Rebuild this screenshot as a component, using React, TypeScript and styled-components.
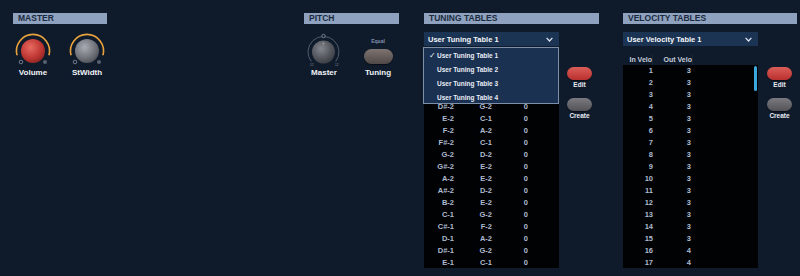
import React from "react";
import styled, { createGlobalStyle } from "styled-components";

const GlobalStyle = createGlobalStyle`
  html, body {
    margin: 0;
    padding: 0;
    background: #0f1b2b;
  }

  body {
    font-family: "Liberation Sans", Arial, sans-serif;
  }
`;

const Panel = styled.div`
  width: 800px;
  height: 276px;
  box-sizing: border-box;
  padding: 13px 3px 0 13px;

  display: flex;
  align-items: flex-start;

  background: #0f1b2b;
  overflow: hidden;
`;

const Section = styled.section<{ $width: number; $gap?: number }>`
  width: ${(p) => p.$width}px;
  margin-right: ${(p) => p.$gap ?? 0}px;
  flex: none;

  display: flex;
  flex-direction: column;
`;

const SectionTitle = styled.div`
  height: 11px;
  padding-left: 5px;

  background: #8ea2bf;
  color: #1c2a3e;
  font-size: 8.5px;
  font-weight: 700;
  line-height: 11px;
`;

const ControlRow = styled.div`
  display: flex;
  gap: 14px;
  margin-top: 9px;
`;

const Control = styled.div`
  width: 40px;

  display: flex;
  flex-direction: column;
  align-items: center;
`;

const ControlLabel = styled.div`
  margin-top: 1px;

  color: #f1f3f7;
  font-size: 8px;
  font-weight: 700;
  line-height: 10px;
`;

const SwitchBox = styled.div`
  height: 34px;

  display: flex;
  flex-direction: column;
  align-items: center;
`;

const SwitchValue = styled.div`
  margin-top: 5px;

  color: #8294b0;
  font-size: 5px;
  font-weight: 700;
  line-height: 7px;
`;

const PillButton = styled.div<{ $tone: "red" | "grey" | "brown"; $w: number; $h: number }>`
  width: ${(p) => p.$w}px;
  height: ${(p) => p.$h}px;
  border-radius: ${(p) => p.$h / 2}px;

  background: ${(p) =>
    p.$tone === "red"
      ? "linear-gradient(#dc5d58, #b9302f)"
      : p.$tone === "brown"
      ? "linear-gradient(#7e7472, #4f4846)"
      : "linear-gradient(#7b7a80, #535257)"};
  box-shadow: 0 1px 1px rgba(0, 0, 0, 0.5);
`;

const TuningPill = styled(PillButton)`
  margin-top: 4px;
`;

const Dropdown = styled.div`
  position: relative;
  width: 135px;
  height: 14px;
  margin-top: 8px;
  padding: 0 6px 0 4px;
  box-sizing: border-box;

  display: flex;
  align-items: center;
  justify-content: space-between;

  background: #1c3453;
  color: #f4f6fa;
  font-size: 7.5px;
  font-weight: 700;
`;

const Menu = styled.ul`
  position: absolute;
  top: 15px;
  left: -1px;
  z-index: 2;

  width: 136px;
  height: 57px;
  margin: 0;
  padding: 0;
  box-sizing: border-box;

  list-style: none;
  background: #1b3151;
  border: 1px solid #7d8ea8;
`;

const MenuItem = styled.li`
  height: 14px;
  padding-left: 5px;

  display: flex;
  align-items: center;

  color: #e9eef6;
  font-size: 6.5px;
  font-weight: 700;
`;

const Check = styled.span`
  width: 8px;

  font-family: "DejaVu Sans", sans-serif;
  font-size: 8px;
  font-weight: 700;
`;

const ColumnHead = styled.div`
  height: 11px;
  margin-top: 8px;
  width: 135px;

  display: grid;
  grid-template-columns: 30px 40px 34px;
`;

const HeadCell = styled.div`
  text-align: right;

  color: #c5cedc;
  font-size: 7px;
  font-weight: 700;
  line-height: 11px;
  border-right: 1px solid rgba(255, 255, 255, 0.05);
`;

const TableRow = styled.div`
  display: flex;
  align-items: flex-start;
`;

/* $skip: rows scrolled under the open menu */
const TableBody = styled.div<{ $skip?: number }>`
  position: relative;
  width: 135px;
  height: 203px;
  box-sizing: border-box;
  padding-top: ${(p) => (p.$skip ?? 0) * 12}px;
  flex: none;

  background: #010204;
  overflow: hidden;
`;

const DataRow = styled.div`
  height: 12px;

  display: grid;
  grid-template-columns: 30px 38px 36px;

  color: #aebbd0;
  font-size: 7.5px;
  font-weight: 700;
  line-height: 12px;
  text-align: right;
`;

const ScrollThumb = styled.div`
  position: absolute;
  top: 1px;
  right: 1px;

  width: 3px;
  height: 25px;
  border-radius: 2px;

  background: #3ba7de;
`;

const SideButtons = styled.div<{ $offset: number }>`
  width: 25px;
  margin-left: ${(p) => p.$offset}px;
  padding-top: 2px;

  display: flex;
  flex-direction: column;
  align-items: center;
`;

const SideLabel = styled.div`
  margin: 1px 0 9px;

  color: #e9edf4;
  font-size: 6.5px;
  font-weight: 700;
  line-height: 8px;
`;

type KnobProps = { fill: [string, string, string] };

function OrangeKnob({ fill }: KnobProps) {
  const id = `k${fill[0].slice(1)}`;
  return (
    <svg width="40" height="34" viewBox="0 0 40 34">
      <defs>
        <radialGradient id={id} cx="40%" cy="35%" r="70%">
          <stop offset="0%" stopColor={fill[0]} />
          <stop offset="60%" stopColor={fill[1]} />
          <stop offset="100%" stopColor={fill[2]} />
        </radialGradient>
      </defs>
      <path
        d="M4.1 22.3 A16.5 16.5 0 1 1 35.9 22.3"
        fill="none"
        stroke="#e9a23c"
        strokeWidth="1.6"
      />
      <circle cx="8" cy="29" r="1.8" fill="none" stroke="#7b8598" strokeWidth="0.9" />
      <circle cx="32" cy="29" r="2" fill="#56606e" />
      <circle cx="20" cy="18" r="12" fill={`url(#${id})`} />
    </svg>
  );
}

function PitchKnob() {
  return (
    <svg width="40" height="34" viewBox="0 0 40 34">
      <defs>
        <radialGradient id="pk" cx="40%" cy="35%" r="70%">
          <stop offset="0%" stopColor="#85878f" />
          <stop offset="60%" stopColor="#55575f" />
          <stop offset="100%" stopColor="#3a3c44" />
        </radialGradient>
      </defs>
      <path
        d="M7.3 28.5 A15.5 15.5 0 1 1 31.7 28.5"
        fill="none"
        stroke="#4f5a6c"
        strokeWidth="1"
      />
      <circle cx="19.5" cy="3" r="1.7" fill="#0f1b2b" stroke="#8a94a6" strokeWidth="0.8" />
      <circle cx="19.5" cy="19" r="11.5" fill="url(#pk)" />
      <circle cx="19.5" cy="10.5" r="0.9" fill="#9aa0aa" />
      <text x="5" y="33" fontSize="3.2" fill="#7f8a9c" fontFamily="Liberation Sans">-12</text>
      <text x="31" y="33" fontSize="3.2" fill="#7f8a9c" fontFamily="Liberation Sans">12</text>
    </svg>
  );
}

function Chevron() {
  return (
    <svg width="7" height="5" viewBox="0 0 7 5">
      <polyline points="0.6,0.8 3.5,4 6.4,0.8" fill="none" stroke="#dfe6f0" strokeWidth="1.2" />
    </svg>
  );
}

// first rows (C-2 .. D-2) sit under the open menu
const tuningRows: [string, string, string][] = [
  ["D#-2", "G-2", "0"],
  ["E-2", "C-1", "0"],
  ["F-2", "A-2", "0"],
  ["F#-2", "C-1", "0"],
  ["G-2", "D-2", "0"],
  ["G#-2", "E-2", "0"],
  ["A-2", "E-2", "0"],
  ["A#-2", "D-2", "0"],
  ["B-2", "E-2", "0"],
  ["C-1", "G-2", "0"],
  ["C#-1", "F-2", "0"],
  ["D-1", "A-2", "0"],
  ["D#-1", "G-2", "0"],
  ["E-1", "C-1", "0"],
];

const velocityRows = Array.from({ length: 17 }, (_, i) => [String(i + 1), i < 15 ? "3" : "4"]);

const tuningTables = ["User Tuning Table 1", "User Tuning Table 2", "User Tuning Table 3", "User Tuning Table 4"];

export default function App() {
  return (
    <>
      <GlobalStyle />
      <Panel>
        <Section $width={94} $gap={197}>
          <SectionTitle>MASTER</SectionTitle>
          <ControlRow>
            <Control>
              <OrangeKnob fill={["#e66a60", "#c23a36", "#8e2422"]} />
              <ControlLabel>Volume</ControlLabel>
            </Control>
            <Control>
              <OrangeKnob fill={["#a9abb3", "#75777f", "#4d4f57"]} />
              <ControlLabel>StWidth</ControlLabel>
            </Control>
          </ControlRow>
        </Section>

        <Section $width={95} $gap={25}>
          <SectionTitle>PITCH</SectionTitle>
          <ControlRow>
            <Control>
              <PitchKnob />
              <ControlLabel>Master</ControlLabel>
            </Control>
            <Control>
              <SwitchBox>
                <SwitchValue>Equal</SwitchValue>
                <TuningPill $tone="brown" $w={29} $h={15} />
              </SwitchBox>
              <ControlLabel>Tuning</ControlLabel>
            </Control>
          </ControlRow>
        </Section>

        <Section $width={175} $gap={24}>
          <SectionTitle>TUNING TABLES</SectionTitle>
          <Dropdown>
            <span>User Tuning Table 1</span>
            <Chevron />
            <Menu>
              {tuningTables.map((name, i) => (
                <MenuItem key={name}>
                  <Check>{i === 0 ? "✓" : ""}</Check>
                  {name}
                </MenuItem>
              ))}
            </Menu>
          </Dropdown>
          <ColumnHead />
          <TableRow>
            <TableBody $skip={3}>
              {tuningRows.map((r) => (
                <DataRow key={r[0]}>
                  <span>{r[0]}</span>
                  <span>{r[1]}</span>
                  <span>{r[2]}</span>
                </DataRow>
              ))}
            </TableBody>
            <SideButtons $offset={8}>
              <PillButton $tone="red" $w={25} $h={13} />
              <SideLabel>Edit</SideLabel>
              <PillButton $tone="grey" $w={25} $h={13} />
              <SideLabel>Create</SideLabel>
            </SideButtons>
          </TableRow>
        </Section>

        <Section $width={174}>
          <SectionTitle>VELOCITY TABLES</SectionTitle>
          <Dropdown>
            <span>User Velocity Table 1</span>
            <Chevron />
          </Dropdown>
          <ColumnHead>
            <HeadCell>In Velo</HeadCell>
            <HeadCell>Out Velo</HeadCell>
          </ColumnHead>
          <TableRow>
            <TableBody>
              {velocityRows.map((r) => (
                <DataRow key={r[0]}>
                  <span>{r[0]}</span>
                  <span>{r[1]}</span>
                </DataRow>
              ))}
              <ScrollThumb />
            </TableBody>
            <SideButtons $offset={9}>
              <PillButton $tone="red" $w={25} $h={13} />
              <SideLabel>Edit</SideLabel>
              <PillButton $tone="grey" $w={25} $h={13} />
              <SideLabel>Create</SideLabel>
            </SideButtons>
          </TableRow>
        </Section>
      </Panel>
    </>
  );
}
